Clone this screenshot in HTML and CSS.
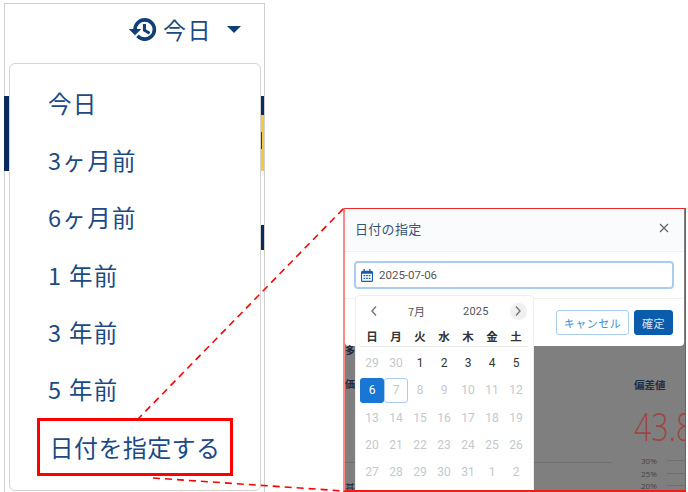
FILE: index.html
```html
<!DOCTYPE html>
<html lang="ja">
<head>
<meta charset="utf-8">
<title>日付の指定</title>
<link rel="stylesheet" href="styles.css">
</head>
<body>
<div class="stage">
  <section class="panel">
    <div class="toolbar">
      <svg class="history" viewBox="0 0 24 24" aria-hidden="true"><path d="M13 3c-4.970 0-9 4.030-9 9H1l3.890 3.890.07.14L9 12H6c0-3.870 3.130-7 7-7s7 3.130 7 7-3.130 7-7 7c-1.930 0-3.680-.79-4.940-2.060l-1.420 1.420C8.270 19.990 10.510 21 13 21c4.970 0 9-4.030 9-9s-4.030-9-9-9zm-1 5v5l4.280 2.540.72-1.210-3.500-2.080V8H12z"/></svg>
      <span class="toolbar-label">今日</span>
      <span class="caret"></span>
    </div>
    <div class="behind">
      <div class="behind-left"></div>
      <div class="behind-right"><i class="navy"></i><i class="yellow"></i><i class="glyph"></i></div>
    </div>
  </section>

  <ul class="menu">
    <li>今日</li>
    <li>3ヶ月前</li>
    <li>6ヶ月前</li>
    <li>1 年前</li>
    <li>3 年前</li>
    <li>5 年前</li>
    <li class="picked"><span>日付を指定する</span></li>
  </ul>

  <section class="zoom">
    <div class="modal">
      <header class="modal-head">
        <h2>日付の指定</h2>
        <svg class="close" viewBox="0 0 12 12" aria-hidden="true"><path d="M2 2l8 8M10 2l-8 8"/></svg>
      </header>
      <div class="modal-body">
        <div class="date-input">
          <svg class="cal" viewBox="0 0 14 15" aria-hidden="true">
            <path d="M3 0h1.500v2h5V0H11v2h1.200A1.800 1.800 0 0 1 14 3.800v9.400a1.800 1.800 0 0 1-1.800 1.800H1.800A1.800 1.800 0 0 1 0 13.200V3.800A1.800 1.800 0 0 1 1.800 2H3zM1.300 5.500v7.700c0 .3.200.5.500.5h10.400c.3 0 .5-.2.500-.5V5.500z"/>
            <path d="M3 7h2v1.500H3zM6 7h2v1.500H6zM9 7h2v1.500H9zM3 10h2v1.500H3zM6 10h2v1.500H6zM9 10h2v1.500H9z"/>
          </svg>
          <span>2025-07-06</span>
        </div>
      </div>
      <footer class="modal-foot">
        <button class="btn ghost">キャンセル</button>
        <button class="btn solid">確定</button>
      </footer>
    </div>
    <div class="backdrop">
      <div class="back-left">
        <span class="s1">多目</span>
        <span class="s2">価 <b></b></span>
        <hr>
        <span class="s3">基</span>
      </div>
      <div class="stats">
        <h3>偏差値</h3>
        <div class="score">43.8</div>
        <div class="tick"><span>30%</span><i></i></div>
        <div class="tick"><span>25%</span><i></i></div>
        <div class="tick"><span>20%</span><i></i></div>
      </div>
    </div>
    <div class="calendar">
      <div class="cal-nav">
        <svg class="chev" viewBox="0 0 8 12" aria-hidden="true"><path d="M6 1.500L2 6l4 4.500"/></svg>
        <span class="month">7月</span>
        <span class="year">2025</span>
        <span class="next"><svg class="chev" viewBox="0 0 8 12" aria-hidden="true"><path d="M2 1.500L6 6l-4 4.500"/></svg></span>
      </div>
      <div class="grid week">
        <span>日</span><span>月</span><span>火</span><span>水</span><span>木</span><span>金</span><span>土</span>
      </div>
      <div class="grid days">
        <span>29</span><span>30</span><span class="on">1</span><span class="on">2</span><span class="on">3</span><span class="on">4</span><span class="on">5</span>
        <span class="sel">6</span><span class="today">7</span><span>8</span><span>9</span><span>10</span><span>11</span><span>12</span>
        <span>13</span><span>14</span><span>15</span><span>16</span><span>17</span><span>18</span><span>19</span>
        <span>20</span><span>21</span><span>22</span><span>23</span><span>24</span><span>25</span><span>26</span>
        <span>27</span><span>28</span><span>29</span><span>30</span><span>31</span><span>1</span><span>2</span>
      </div>
    </div>
  </section>

  <svg class="leaders" viewBox="0 0 688 492" aria-hidden="true">
    <path d="M137 420L344 208"/>
    <path d="M153 478L344 491"/>
  </svg>
</div>
</body>
</html>
```
FILE: styles.css
```css
* { box-sizing: border-box; }
html, body { margin: 0; padding: 0; background: #fff; }
body { font-family: "Noto Sans CJK JP", "Noto Sans", sans-serif; }

.stage { position: relative; width: 688px; height: 492px; overflow: hidden; background: #fff; }

.panel {
  margin: 3px 0 0 4px;
  width: 261px;
  height: 489px;
  border: 1px solid #d0d0d0;
  border-bottom: 0;
  display: flex;
  flex-direction: column;
}
.toolbar {
  height: 50px;
  display: flex;
  align-items: center;
  justify-content: flex-end;
  padding: 0 23px 0 0;
  color: #1b4a85;
}
.history { width: 29px; height: 29px; fill: #0f3f78; stroke: #0f3f78; stroke-width: 1; margin-right: 5px; }
.toolbar-label { font-size: 23px; line-height: 1; letter-spacing: 1.500px; margin-right: 15px; }
.caret { width: 0; height: 0; border-left: 7px solid transparent; border-right: 7px solid transparent; border-top: 7px solid #0f3f78; }

.behind { display: flex; justify-content: space-between; margin: 42px 0 0 -1px; }
.behind-left { width: 5px; height: 75px; background: #0a2a5e; }
.behind-right { width: 4px; display: flex; flex-direction: column; }
.navy { display: block; height: 19px; background: #0a2a5e; }
.yellow { display: block; height: 56px; background: linear-gradient(#3a3a3a, #3a3a3a) no-repeat 1px 17px / 1px 17px, #f7c63f; }
.glyph { display: block; height: 25px; margin-top: 54px; background: #0a2a5e; }

.menu {
  position: absolute;
  left: 9px;
  top: 63px;
  width: 252px;
  height: 428px;
  margin: 0;
  padding: 10px 0 0 0;
  list-style: none;
  background: #fff;
  border: 1px solid #d4d4d4;
  border-radius: 6px;
  display: flex;
  flex-direction: column;
}
.menu li {
  height: 57.300px;
  flex: none;
  display: flex;
  align-items: center;
  padding-left: 38px;
  font-size: 23.500px;
  color: #1b4a85;
  letter-spacing: 1.300px;
}
.menu .picked { padding-left: 27px; align-items: flex-start; }
.menu .picked span {
  width: 196px;
  height: 58px;
  border: 3.500px solid #f00;
  display: flex;
  align-items: center;
  justify-content: center;
  font-size: 24px;
  letter-spacing: .4px;
  white-space: nowrap;
}

.zoom {
  position: absolute;
  left: 343px;
  top: 208px;
  width: 343px;
  height: 284px;
  border: 1px solid #ee2a2a;
  border-left: 2px solid #f88;
  border-bottom: 2px solid #f01c1c;
  background: #7f7f7f;
  overflow: hidden;
  display: flex;
  flex-direction: column;
}
.modal { width: 339px; height: 137px; flex: none; background: #fff; border-radius: 0 0 4px 4px; }
.modal-head {
  height: 43px;
  background: #fafbfd;
  border-bottom: 1px solid #eef0f3;
  display: flex;
  align-items: center;
  justify-content: space-between;
  padding: 0 14px 4px 10px;
}
.modal-head h2 { margin: 0; font-size: 13px; font-weight: 400; color: #3a5378; letter-spacing: .3px; }
.close { width: 12px; height: 12px; margin-bottom: 1px; fill: none; stroke: #666; stroke-width: 1.300; }
.modal-body { height: 47px; padding: 9px 10px 0 9px; border-bottom: 1px solid #f0f1f3; }
.date-input {
  height: 28px;
  width: 320px;
  border: 2px solid #a9cdf2;
  border-radius: 4px;
  display: flex;
  align-items: center;
  padding-left: 5px;
  font-family: Roboto, sans-serif;
  font-size: 11.500px;
  color: #555;
}
.cal { width: 12px; height: 13px; fill: #1a5ca8; margin-right: 6px; }
.modal-foot { display: flex; justify-content: flex-end; gap: 5px; padding: 11px 11px 0 0; }
.btn {
  height: 25px;
  padding: 0;
  border-radius: 3px;
  font-family: inherit;
  font-size: 11px;
  letter-spacing: .5px;
}
.ghost { width: 73px; background: #fff; border: 1px solid #a9cdf2; color: #3f8fd2; }
.solid { width: 39px; background: #0b5cad; border: 1px solid #0b5cad; color: #d5e4f3; }

.backdrop { flex: 1; display: flex; justify-content: space-between; color: #1c2a3c; }
.back-left { width: 267px; display: flex; flex-direction: column; font-size: 10px; line-height: 12px; }
.back-left hr { width: 100%; margin: 72px 0 0; border: 0; border-top: 1px solid #707070; }
.s1 { margin-top: -2px; font-weight: 700; }
.s2 { margin-top: 22px; font-weight: 700; }
.s2 b { display: inline-block; width: 2px; height: 8px; background: #1d4f8a; }
.s3 { margin-top: 19px; }

.stats { width: 51px; flex: none; overflow: hidden; padding-top: 32px; }
.stats h3 { margin: 0; font-size: 10.500px; line-height: 14px; font-weight: 700; color: #1c2f47; white-space: nowrap; }
.score { font-family: "Open Sans", sans-serif; font-weight: 300; font-size: 39px; line-height: 42px; margin: 13px 0 7px 0; color: #a04545; white-space: nowrap; transform: scaleX(.78); transform-origin: left center; }
.tick { display: flex; align-items: center; height: 12.800px; padding-left: 7px; font-size: 8px; color: #444; font-family: "Open Sans", sans-serif; gap: 10px; }
.tick i { flex: 1; height: 1px; background: #6f6f6f; }

.calendar {
  position: absolute;
  left: 10px;
  top: 86px;
  width: 179px;
  height: 200px;
  background: #fff;
  border: 1px solid #eceef1;
  border-radius: 4px;
  padding: 0 4px;
  font-family: Roboto, "Noto Sans CJK JP", sans-serif;
}
.cal-nav { height: 30px; display: flex; align-items: center; font-size: 11px; color: #555; position: relative; }
.chev { width: 8px; height: 12px; fill: none; stroke: #777; stroke-width: 1.400; }
.cal-nav > .chev { margin-left: 10px; }
.month { margin-left: 30px; font-family: "Noto Sans CJK JP", sans-serif; }
.year { margin-left: 38px; letter-spacing: .2px; }
.next { width: 17px; height: 17px; margin-left: 21px; border-radius: 50%; background: #f0f0f0; display: flex; align-items: center; justify-content: center; }
.grid { display: grid; grid-template-columns: repeat(7, 24px); }
.week { height: 21px; align-items: center; border-bottom: 1px solid #e8e9eb; width: 168px; }
.week span { text-align: center; font-family: "Noto Sans CJK JP", sans-serif; font-size: 11.500px; font-weight: 700; color: #333; }
.days { grid-auto-rows: 27.300px; margin-top: 4px; }
.days span { display: flex; align-items: center; justify-content: center; font-size: 12px; color: #c5c8ce; border-radius: 3px; margin-bottom: 3px; }
.days .on { color: #333; }
.days .sel { background: #1976d2; color: #fff; }
.days .today { border: 1px solid #a9cdf2; color: #c5c8ce; }

.leaders { position: absolute; left: 0; top: 0; width: 688px; height: 492px; fill: none; stroke: #f00; stroke-width: 1.600; stroke-dasharray: 7 5; pointer-events: none; }
```
